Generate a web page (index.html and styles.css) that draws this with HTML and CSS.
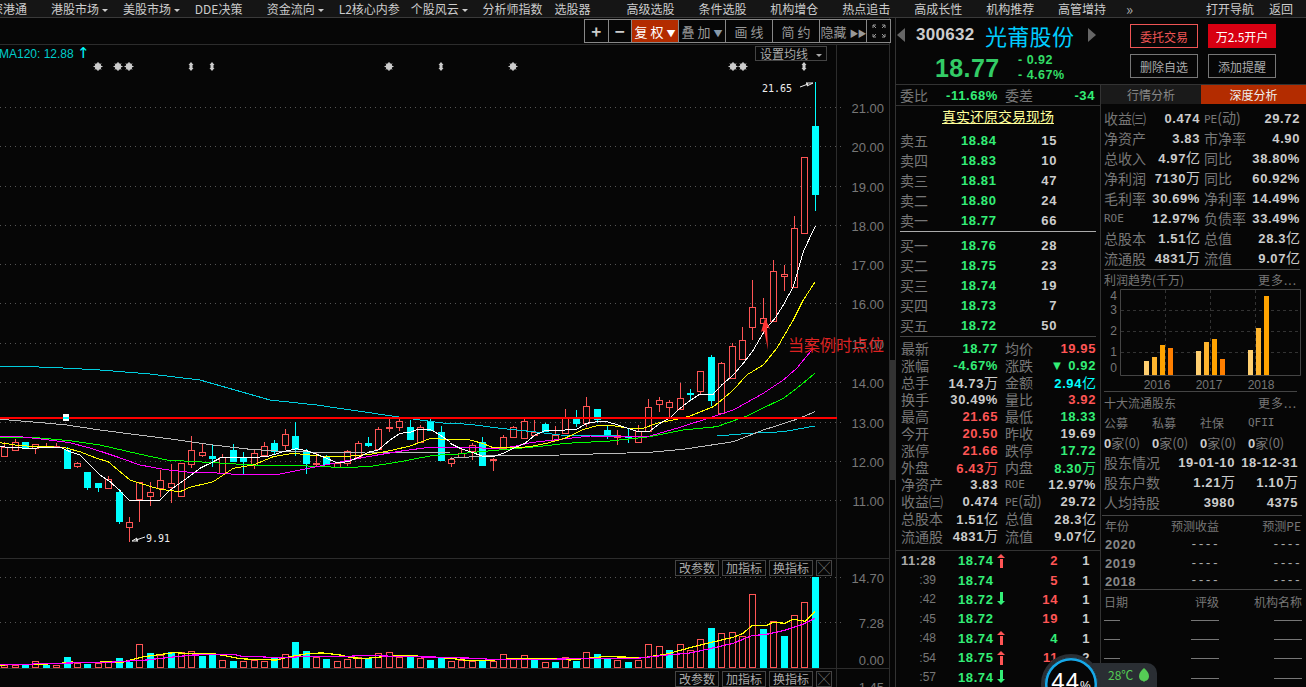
FILE: index.html

```html
<!DOCTYPE html>
<html lang="zh-CN">
<head>
  <meta charset="UTF-8" />
  <title>光莆股份 300632</title>
  <link rel="stylesheet" href="styles.css">
</head>
<body>
<nav class="topnav">
  <a>沪深港通</a>
  <a>港股市场<i class="caret"></i></a>
  <a>美股市场<i class="caret"></i></a>
  <a>DDE决策</a>
  <a>资金流向<i class="caret"></i></a>
  <a>L2核心内参</a>
  <a>个股风云<i class="caret"></i></a>
  <a>分析师指数</a>
  <a>选股器</a>
  <a>高级选股</a>
  <a>条件选股</a>
  <a>机构增仓</a>
  <a>热点追击</a>
  <a>高成长性</a>
  <a>机构推荐</a>
  <a>高管增持</a>
  <a class="more">»</a>
  <a class="nav-open">打开导航</a>
  <a class="nav-back">返回</a>
</nav>

<div class="app">
  <main class="chart-pane">
    <svg id="chart" class="chart" width="895" height="669" viewBox="0 18 895 669"></svg>

    <div class="toolbar">
      <button class="sign">+</button>
      <button class="sign">−</button>
      <button class="active">复 权 <b>▼</b></button>
      <button>叠 加 <b class="tri">▼</b></button>
      <button>画 线</button>
      <button>简 约</button>
      <button class="hide-btn">隐藏 <b>▶▶</b></button>
      <button class="full">
        <svg width="14" height="14" viewBox="0 0 14 14"><path d="M1 4V1h3M10 1h3v3M13 10v3h-3M4 13H1v-3M1 1l3 3M13 1l-3 3M13 13l-3-3M1 13l3-3" /></svg>
      </button>
    </div>

    <div class="ma-label">MA120: 12.88 <span class="ma-arrow">↑</span></div>
    <div class="ma-set">设置均线<i class="caret dim"></i></div>
    <div class="note">当案例时点位</div>

    <div class="ind-tools ind-top"><span>改参数</span><span>加指标</span><span>换指标</span><span class="x">╳</span></div>
    <div class="ind-tools ind-bottom"><span>改参数</span><span>加指标</span><span>换指标</span><span class="x">╳</span></div>
    <div class="scroll"><i></i></div>
  </main>

  <aside class="side">
    <header class="head">
      <div class="quote">
        <div class="quote-top">
          <i class="tri-left"></i>
          <span class="code">300632</span>
          <span class="name">光莆股份</span>
          <i class="tri-right"></i>
        </div>
        <div class="quote-price">
          <span class="last">18.77</span>
          <div class="delta"><span>- 0.92</span><span>- 4.67%</span></div>
        </div>
      </div>
      <div class="actions">
        <button class="btn-line">委托交易</button>
        <button class="btn-red">万2.5开户</button>
        <button>删除自选</button>
        <button>添加提醒</button>
      </div>
    </header>

    <div class="panes">
      <section class="col-left">
        <div class="ratio">
          <span class="lb">委比</span><span class="g num r1">-11.68%</span>
          <span class="lb r2">委差</span><span class="g num r3">-34</span>
        </div>
        <div class="real-link"><a>真实还原交易现场</a></div>

        <div class="book">
          <div class="bk"><span class="lb">卖五</span><span class="g num">18.84</span><span class="w num">15</span></div>
          <div class="bk"><span class="lb">卖四</span><span class="g num">18.83</span><span class="w num">10</span></div>
          <div class="bk"><span class="lb">卖三</span><span class="g num">18.81</span><span class="w num">47</span></div>
          <div class="bk"><span class="lb">卖二</span><span class="g num">18.80</span><span class="w num">24</span></div>
          <div class="bk"><span class="lb">卖一</span><span class="g num">18.77</span><span class="w num">66</span></div>
        </div>
        <div class="book bids">
          <div class="bk"><span class="lb">买一</span><span class="g num">18.76</span><span class="w num">28</span></div>
          <div class="bk"><span class="lb">买二</span><span class="g num">18.75</span><span class="w num">23</span></div>
          <div class="bk"><span class="lb">买三</span><span class="g num">18.74</span><span class="w num">19</span></div>
          <div class="bk"><span class="lb">买四</span><span class="g num">18.73</span><span class="w num">7</span></div>
          <div class="bk"><span class="lb">买五</span><span class="g num">18.72</span><span class="w num">50</span></div>
        </div>

        <div class="stats">
          <div class="st"><span class="lb">最新</span><span class="g num">18.77</span><span class="lb">均价</span><span class="p num">19.95</span></div>
          <div class="st"><span class="lb">涨幅</span><span class="g num">-4.67%</span><span class="lb">涨跌</span><span class="g num">▼ 0.92</span></div>
          <div class="st"><span class="lb">总手</span><span class="w num">14.73<u>万</u></span><span class="lb">金额</span><span class="c num">2.94<u>亿</u></span></div>
          <div class="st"><span class="lb">换手</span><span class="w num">30.49%</span><span class="lb">量比</span><span class="p num">3.92</span></div>
          <div class="st"><span class="lb">最高</span><span class="p num">21.65</span><span class="lb">最低</span><span class="g num">18.33</span></div>
          <div class="st"><span class="lb">今开</span><span class="p num">20.50</span><span class="lb">昨收</span><span class="w num">19.69</span></div>
          <div class="st"><span class="lb">涨停</span><span class="p num">21.66</span><span class="lb">跌停</span><span class="g num">17.72</span></div>
          <div class="st"><span class="lb">外盘</span><span class="p num">6.43<u>万</u></span><span class="lb">内盘</span><span class="g num">8.30<u>万</u></span></div>
          <div class="st"><span class="lb">净资产</span><span class="w num">3.83</span><span class="lb sm">ROE</span><span class="w num">12.97%</span></div>
          <div class="st"><span class="lb">收益㈢</span><span class="w num">0.474</span><span class="lb pe"><span class="sm">PE</span>(动)</span><span class="w num">29.72</span></div>
          <div class="st"><span class="lb">总股本</span><span class="w num">1.51<u>亿</u></span><span class="lb">总值</span><span class="w num">28.3<u>亿</u></span></div>
          <div class="st"><span class="lb">流通股</span><span class="w num">4831<u>万</u></span><span class="lb">流值</span><span class="w num">9.07<u>亿</u></span></div>
        </div>

        <div class="ticks">
          <div class="tk"><span class="t big">11:28</span><span class="price num">18.74</span><i class="up"></i><span class="p num v">2</span><span class="w num n">1</span></div>
          <div class="tk"><span class="t">:39</span><span class="price num">18.74</span><i></i><span class="p num v">5</span><span class="w num n">1</span></div>
          <div class="tk"><span class="t">:42</span><span class="price num">18.72</span><i class="down"></i><span class="p num v">14</span><span class="w num n">1</span></div>
          <div class="tk"><span class="t">:45</span><span class="price num">18.72</span><i></i><span class="p num v">19</span><span class="w num n">1</span></div>
          <div class="tk"><span class="t">:48</span><span class="price num">18.74</span><i class="up"></i><span class="g num v">4</span><span class="w num n">1</span></div>
          <div class="tk"><span class="t">:54</span><span class="price num">18.75</span><i class="up"></i><span class="p num v">11</span><span class="w num n">2</span></div>
          <div class="tk"><span class="t">:57</span><span class="price num">18.74</span><i class="down"></i><span class="p num v">5</span><span class="w num n">2</span></div>
        </div>
      </section>

      <section class="col-right">
        <div class="tabs"><a>行情分析</a><a class="on">深度分析</a></div>

        <div class="fund">
          <div class="fd"><span class="lb">收益㈢</span><span class="w num">0.474</span><span class="lb pe"><span class="sm">PE</span>(动)</span><span class="w num">29.72</span></div>
          <div class="fd"><span class="lb">净资产</span><span class="w num">3.83</span><span class="lb">市净率</span><span class="w num">4.90</span></div>
          <div class="fd"><span class="lb">总收入</span><span class="w num">4.97<u>亿</u></span><span class="lb">同比</span><span class="w num">38.80%</span></div>
          <div class="fd"><span class="lb">净利润</span><span class="w num">7130<u>万</u></span><span class="lb">同比</span><span class="w num">60.92%</span></div>
          <div class="fd"><span class="lb">毛利率</span><span class="w num">30.69%</span><span class="lb">净利率</span><span class="w num">14.49%</span></div>
          <div class="fd"><span class="lb sm">ROE</span><span class="w num">12.97%</span><span class="lb">负债率</span><span class="w num">33.49%</span></div>
          <div class="fd"><span class="lb">总股本</span><span class="w num">1.51<u>亿</u></span><span class="lb">总值</span><span class="w num">28.3<u>亿</u></span></div>
          <div class="fd"><span class="lb">流通股</span><span class="w num">4831<u>万</u></span><span class="lb">流值</span><span class="w num">9.07<u>亿</u></span></div>
        </div>

        <div class="sub-title profit"><span>利润趋势(千万)</span><em>更多...</em></div>
        <div class="profit-chart">
          <svg width="205" height="102" viewBox="0 2 205 102">
            <g class="pc-grid">
              <path d="M19.5 2.500H199.500V88.500H19.500Z" />
              <path class="dash" d="M64.500 3V88M109.500 3V88M154.500 3V88M20 23.500H199M20 44.500H199M20 65.500H199" />
            </g>
            <g class="pc-bars">
              <rect class="q1" x="43" y="74" width="5" height="14" /><rect class="q2" x="51" y="70" width="5" height="18" /><rect class="q3" x="59" y="58" width="5" height="30" /><rect class="q4" x="67" y="61" width="5" height="27" />
              <rect class="q1" x="95" y="64" width="5" height="24" /><rect class="q2" x="103" y="55" width="5" height="33" /><rect class="q3" x="111" y="52" width="5" height="36" /><rect class="q4" x="119" y="72" width="5" height="16" />
              <rect class="q1" x="147" y="63" width="5" height="25" /><rect class="q2" x="155" y="41" width="5" height="47" /><rect class="q3" x="163" y="9" width="5" height="79" />
            </g>
            <g class="pc-text">
              <text x="16" y="13" text-anchor="end">4</text><text x="16" y="27" text-anchor="end">3</text><text x="16" y="48" text-anchor="end">2</text><text x="16" y="69" text-anchor="end">1</text><text x="16" y="85" text-anchor="end">0</text>
              <text x="56" y="102" text-anchor="middle">2016</text><text x="108" y="102" text-anchor="middle">2017</text><text x="160" y="102" text-anchor="middle">2018</text>
            </g>
          </svg>
        </div>

        <div class="sub-title holders"><span>十大流通股东</span><em>更多...</em></div>
        <div class="four heads"><span>公募</span><span>私募</span><span>社保</span><span class="sm">QFII</span></div>
        <div class="four zero">
          <span><b>0</b>家(0)</span><span><b>0</b>家(0)</span><span><b>0</b>家(0)</span><span><b>0</b>家(0)</span>
        </div>
        <div class="hd"><span class="lb">股东情况</span><span class="w num">19-01-10</span><span class="w num">18-12-31</span></div>
        <div class="hd"><span class="lb">股东户数</span><span class="w num">1.21<u>万</u></span><span class="w num">1.10<u>万</u></span></div>
        <div class="hd"><span class="lb">人均持股</span><span class="w num">3980</span><span class="w num">4375</span></div>

        <div class="fc fc-head"><span>年份</span><span>预测收益</span><span>预测PE</span></div>
        <div class="fc"><span class="yr">2020</span><span class="dashes">----</span><span class="dashes">----</span></div>
        <div class="fc"><span class="yr">2019</span><span class="dashes">----</span><span class="dashes">----</span></div>
        <div class="fc fc-last"><span class="yr">2018</span><span class="dashes">----</span><span class="dashes">----</span></div>

        <div class="rt rt-head"><span>日期</span><span>评级</span><span>机构名称</span></div>
        <div class="rt rt-row"><i class="s"></i><i></i><i></i></div>
        <div class="rt rt-row"><i class="s"></i><i></i><i></i></div>
        <div class="rt rt-row"><i class="s"></i><i></i><i></i></div>
        <div class="rt rt-row"><i class="s"></i><i></i><i></i></div>
      </section>
    </div>

    <div class="monitor">
      <div class="gauge"><span>44<small>%</small></span></div>
      <div class="temp">28℃
        <svg width="10" height="14" viewBox="0 0 10 14"><path d="M5 0C8 3 10 5 10 8.500C10 11 8 13 5.500 13V14H4.500V13C2 13 0 11 0 8.500C0 5 2 3 5 0Z" /></svg>
      </div>
    </div>
  </aside>
</div>
<script src="chart.js"></script>
</body>
</html>
```

FILE: styles.css

```css
* { box-sizing: border-box; }
html, body { margin: 0; padding: 0; }
body {
  width: 1306px; height: 687px; overflow: hidden;
  background: #060606; color: #ccc;
  font-family: "Noto Sans CJK SC", "Liberation Sans", sans-serif;
  font-size: 12px;
}
button { font-family: inherit; cursor: pointer; }

/* top menu */
.topnav {
  display: flex; align-items: center;
  height: 18px; margin-left: -21px; width: 1327px;
  background: #151515; border-bottom: 1px solid #3a3a3a;
  line-height: 17px; color: #ccc; white-space: nowrap;
}
.topnav a { flex: 0 0 71.95px; }
.topnav .more { flex: 0 0 20px; margin-left: -4px; color: #aaa; font-size: 15px; }
.topnav .nav-open { flex: 0 0 63px; margin-left: 60px; }
.topnav .nav-back { flex: 0 0 40px; }
.caret {
  display: inline-block; width: 0; height: 0; margin-left: 3px; vertical-align: 2px;
  border: 3px solid transparent; border-top: 3px solid #ccc; border-bottom: 0;
}
.caret.dim { margin-left: 8px; border-top-color: #aaa; }

.app { display: flex; height: 669px; }

/* chart */
.chart-pane { position: relative; width: 895px; flex: none; overflow: hidden; }
.chart { display: block; }
.chart .grid { stroke: #555; stroke-dasharray: 1 4; fill: none; }
.chart .rule { stroke: #2c2c2c; fill: none; }
.chart .neck { stroke: #f00; stroke-width: 2; }
.chart text { font-family: "Liberation Sans", sans-serif; }
.chart .axis { fill: #777; font-size: 13px; text-anchor: end; }
.chart .peak { fill: #eee; font-family: "DejaVu Sans Mono", monospace; font-size: 10px; }
.chart .pointer { stroke: #eee; fill: none; }
.chart .mark { fill: #ccc; stroke: #ccc; }
.chart .flip { fill: #ccc; }
.chart .up { stroke: #f55; fill: #060606; }
.chart .dn { stroke: #0ff; fill: #0ff; }
.chart .wick-up { stroke: #f55; }
.chart .wick-dn { stroke: #0ff; }
.chart .ma { fill: none; shape-rendering: crispEdges; }
.chart .l1 { stroke: #fff; }
.chart .l2 { stroke: #ff0; }
.chart .l3 { stroke: #f0f; }
.chart .l4 { stroke: #0f0; }
.chart .l5 { stroke: #bbb; }
.chart .l6 { stroke: #0cd; }
.chart .vol { stroke-width: 1.2; }
.chart .note-arrow { fill: #f33; }

.toolbar {
  position: absolute; left: 584px; top: 1px;
  display: flex; height: 24px;
  border: 1px solid #888;
}
.toolbar button {
  flex: none; width: 47px; padding: 0;
  background: #060606; color: #999; border: 0; border-right: 1px solid #888;
  font-size: 13px; white-space: nowrap;
}
.toolbar button b { font-size: 9px; color: #ccc; font-weight: normal; }
.toolbar .sign { width: 23.5px; color: #ccc; font-size: 17px; font-weight: bold; line-height: 18px; }
.toolbar .active { background: #b32c00; color: #fff; }
.toolbar .active b { color: #fff; }
.toolbar .tri { color: #89a; }
.toolbar .hide-btn b { color: #999; letter-spacing: -1px; }
.toolbar .full { width: 23px; border-right: 0; }
.full svg { display: block; margin: 0 auto; fill: none; stroke: #999; }

.ma-label {
  position: absolute; left: -1px; top: 27px;
  color: #0cc; font: 12px/16px "Liberation Sans", sans-serif;
}
.ma-arrow { color: #0ff; font: 15px/16px "DejaVu Sans", sans-serif; }
.ma-set {
  position: absolute; left: 755px; top: 28px; width: 72px; height: 15px;
  border: 1px solid #444; color: #aaa; line-height: 13px; text-align: center;
}
.note {
  position: absolute; left: 788px; top: 315px;
  color: #d22; font-size: 16px; line-height: 22px; white-space: nowrap;
}

.ind-tools { position: absolute; left: 675px; display: flex; gap: 3px; height: 16px; }
.ind-top { top: 542px; }
.ind-bottom { top: 653px; }
.ind-tools span {
  width: 44px; border: 1px solid #444; color: #aaa; background: #060606;
  text-align: center; line-height: 14px;
}
.ind-tools .x { width: 16px; font-size: 12px; color: #999; }

.scroll { position: absolute; left: 890px; top: 26px; width: 5px; height: 643px; }
.scroll i { display: block; margin-top: 316px; height: 120px; background: #333; }

/* right side */
.side { position: relative; width: 411px; flex: none; border-left: 1px solid #333; }
.head { display: flex; height: 67px; border-bottom: 1px solid #333; }
.quote { width: 234px; flex: none; }
.quote-top { display: flex; align-items: center; height: 33px; }
.tri-left, .tri-right { width: 0; height: 0; border: 7px solid transparent; }
.tri-left { border-right: 8px solid #666; border-left: 0; margin-left: 1px; }
.tri-right { border-left: 8px solid #666; border-right: 0; margin-left: 14px; }
.code {
  margin-left: 11px; width: 69px;
  font: bold 17px/20px "Liberation Sans", sans-serif; color: #ccc; letter-spacing: .3px;
}
.name { color: #0cf; font-size: 22px; line-height: 28px; letter-spacing: .3px; }
.quote-price { display: flex; align-items: center; height: 33px; padding-left: 39px; }
.last { width: 83px; color: #3c6; font: bold 25px/30px "Liberation Sans", sans-serif; letter-spacing: .4px; }
.delta { display: flex; flex-direction: column; color: #3d6; font: bold 12.500px/15px "Liberation Sans", sans-serif; letter-spacing: .5px; }

.actions { display: grid; grid-template-columns: 68px 68px; column-gap: 10px; row-gap: 6px; padding-top: 6px; grid-auto-rows: 24px; }
.actions button { background: #060606; color: #aaa; border: 1px solid #777; padding: 0; font-size: 12px; }
.actions .btn-line { border-color: #e55; color: #e55; }
.actions .btn-red { background: #d80012; border-color: #d80012; color: #fff; }

.panes { display: flex; height: 602px; }
.col-left { width: 205px; flex: none; border-right: 1px solid #333; }
.col-right { width: 205px; flex: none; }

.lb { color: #777; font-size: 14px; line-height: 15px; white-space: nowrap; }
.lb.sm, .sm { font-family: "DejaVu Sans Mono", monospace; font-size: 11px; color: #777; }
.num {
  font: bold 13px/15px "Liberation Sans", sans-serif; letter-spacing: .6px;
  text-align: right; white-space: nowrap;
}
.num u { text-decoration: none; font-family: "Noto Sans CJK SC", sans-serif; font-weight: normal; font-size: 14px; line-height: 15px; letter-spacing: 0; }
.g { color: #3e7; }
.w { color: #ccc; }
.p { color: #f55; }
.c { color: #0ff; }

.ratio {
  display: grid; grid-template-columns: 34px 64px 40px 57px; align-items: center;
  height: 21px; padding-left: 4px; border-bottom: 1px solid #333;
}
.ratio .r2 { padding-left: 7px; }
.real-link { height: 24px; text-align: center; line-height: 20px; }
.real-link a { color: #ff9; font-size: 14px; text-decoration: underline; }

.book { height: 102px; margin: 0 4px; border-bottom: 1px solid #aaa; }
.book.bids { height: 105px; padding-top: 3px; border-bottom-color: #444; }
.bk { display: grid; grid-template-columns: 61px 62px 34px; align-items: center; height: 20px; }
.bk .g { text-align: left; }

.stats { height: 214px; padding: 3px 0 0 5px; margin-top: 0; border-bottom: 1px solid #333; }
.st { display: grid; grid-template-columns: 97px 7px 35px 56px; height: 17.050px; align-items: center; }
.st > :nth-child(1) { grid-column: 1; grid-row: 1; }
.st > :nth-child(2) { grid-column: 1; grid-row: 1; }
.st > :nth-child(3) { grid-column: 3; grid-row: 1; }
.st > :nth-child(4) { grid-column: 3 / 5; grid-row: 1; }

.ticks { padding-top: 0; }
.tk { display: flex; align-items: center; height: 19.400px; }
.tk .t { width: 40px; text-align: right; color: #777; font: 12px "Liberation Sans", sans-serif; }
.tk .big { color: #aaa; font: bold 13px "Liberation Sans", sans-serif; letter-spacing: .5px; }
.tk .price { width: 39px; margin-left: 22px; text-align: left; color: #3e7; }
.tk i { position: relative; width: 9px; height: 14px; flex: none; }
.tk .up::before, .tk .down::before { content: ""; position: absolute; left: 3px; width: 3px; height: 9px; }
.tk .up::after, .tk .down::after { content: ""; position: absolute; left: 0; border: 4.500px solid transparent; }
.tk .up::before { top: 5px; background: #f55; }
.tk .up::after { top: -4px; border-bottom-color: #f55; }
.tk .down::before { top: 0; background: #3e7; }
.tk .down::after { top: 9px; border-top-color: #3e7; }
.tk .v { width: 52px; }
.tk .n { width: 32px; }

.tabs { display: flex; height: 19px; }
.tabs a { display: block; width: 100px; text-align: center; color: #888; background: #1a1a1a; font-size: 12px; line-height: 19px; }
.tabs .on { width: 105px; background: #b32c00; color: #eee; }

.fund { height: 166px; margin: 0 6px 0 3px; padding-top: 4px; border-bottom: 1px solid #444; }
.fd { display: grid; grid-template-columns: 96px 4px 47px 49px; height: 20px; align-items: center; }
.fd > :nth-child(1), .fd > :nth-child(2) { grid-column: 1; grid-row: 1; }
.fd > :nth-child(3) { grid-column: 3; grid-row: 1; }
.fd > :nth-child(4) { grid-column: 3 / 5; grid-row: 1; }

.sub-title { display: flex; justify-content: space-between; margin: 0 9px 0 3px; color: #777; font-size: 12px; }
.sub-title em { font-style: normal; font-size: 12px; letter-spacing: 1px; }
.sub-title.profit { height: 19px; line-height: 19px; }
.profit-chart { height: 102px; }
.profit-chart svg { display: block; }
.pc-grid path { fill: none; stroke: #444; }
.pc-grid .dash { stroke-dasharray: 3 3; stroke: #333; }
.pc-text text { fill: #777; font-size: 12px; font-family: "Liberation Sans", sans-serif; }
.q1 { fill: #ffcf70; }
.q2 { fill: #ffb52e; }
.q3 { fill: #ffa300; }
.q4 { fill: #ff7f00; }

.sub-title.holders { height: 21px; line-height: 21px; margin-right: 9px; border-top: 1px solid #444; }
.four { display: grid; grid-template-columns: repeat(4, 48px); padding-left: 3px; height: 20px; align-items: center; color: #777; font-size: 13px; white-space: nowrap; }
.four b { color: #ccc; font-family: "Liberation Sans", sans-serif; }
.four.heads { font-size: 12px; }
.hd { display: grid; grid-template-columns: 63px 68px 63px; margin-left: 3px; height: 20px; align-items: center; }

.fc { display: grid; grid-template-columns: 52px 62px 82px; align-items: center; height: 19px; margin: 0 0 0 4px; width: 196px; color: #888; text-align: right; }
.fc span:first-child { text-align: left; }
.fc-head { height: 20px; width: 200px; margin: 3px 0 0 1px; padding-left: 3px; border-top: 1px solid #444; color: #777; font-size: 12px; grid-template-columns: 52px 62px 82px; }
.fc .yr { font: bold 13px "Liberation Sans", sans-serif; color: #888; letter-spacing: .5px; }
.fc .dashes { font: 12px "Liberation Mono", monospace; color: #aaa; }
.fc-last { height: 17px; width: 198px; margin-left: 3px; padding-left: 1px; border-bottom: 1px solid #444; grid-template-columns: 52px 62px 82px; }

.rt { display: grid; margin: 0 4px 0 3px; align-items: center; }
.rt-head { height: 21px; padding-top: 2px; color: #777; font-size: 12px; grid-template-columns: 60px 55px 83px; white-space: nowrap; }
.rt-head span:nth-child(2), .rt-head span:nth-child(3) { text-align: right; }
.rt-row { height: 19.200px; grid-template-columns: 87px 28px 55px 28px; }
.rt-row i { display: block; height: 1px; background: #777; }
.rt-row i:nth-child(3) { grid-column: 4; }
.rt-row .s { width: 16px; }

/* floating speed ball */
.monitor { position: absolute; left: 145px; top: 636px; display: flex; align-items: flex-start; }
.gauge {
  position: relative; z-index: 1; width: 60px; height: 60px; border-radius: 50%;
  background: #060606; border: 3px solid #2a2e33; box-shadow: inset 0 0 0 1px #2a2e33, inset 0 0 0 3.500px #16a8e8;
  text-align: center; color: #fff; font: 24px/50px "Liberation Sans", sans-serif; letter-spacing: 1px;
}
.gauge small { font-size: 12px; letter-spacing: 0; }
.temp {
  display: flex; align-items: center; gap: 6px; height: 24px; margin: 9px 0 0 -8px; padding: 0 8px 0 15px;
  background: #2a2e33; border-radius: 0 10px 0 0; color: #5c5; font-size: 12px; line-height: 24px;
}
.temp svg { fill: #5c5; }
```

FILE: chart.js

```js
// all points below were read off at 3x, so y/x are in thirds of a pixel
const LEFT = { x: 0, y: 400 };
const RIGHT = { x: 450, y: 60 };
const VOL_L = { x: 0, y: 550 };
const VOL_R = { x: 450, y: 550 };

// [color, bodyTop, bodyBottom, wickTop, wickBottom]
const candlesA = [
  ['u',140,167,125,170],['u',127,149,118,150],['d',127,145,125,147],['u',131,145,131,162],['u',139,142,128,145],
  ['u',137,141,128,145],['d',150,204,140,207],['u',190,197,185,204],['d',216,261,216,270],['d',249,261,249,276],
  ['u',237,263,228,264],['d',276,362,268,372],['u',367,380,350,426],['u',247,297,247,366],['u',277,287,247,318],
  ['u',241,264,210,290],['u',250,260,192,310],['u',190,287,190,287],['u',151,193,108,203],['u',157,164,128,172],
  ['d',169,173,135,200],['u',172,219,163,222],['d',151,183,132,186],['d',172,183,156,222],['u',160,195,147,207],
  ['u',139,164,126,165],['d',129,154,120,162],['u',103,136,87,150],['d',108,146,66,168],['d',154,189,148,221],
  ['u',188,192,160,198],['d',172,193,165,195],['u',190,202,185,202],['u',154,190,150,198],['u',130,170,123,172],
  ['d',129,134,110,142],['u',88,146,82,148],['u',80,83,55,95],['u',64,82,58,92],['d',81,116,60,120],
  ['u',80,125,74,127],['d',63,90,55,92],['d',96,180,78,182]
];
const candlesB = [
  ['u',1198,1210,1190,1222],['u',1178,1192,1160,1193],['u',1156,1172,1150,1200],['d',1147,1214,1132,1215],['u',1197,1201,1195,1232],
  ['u',1130,1165,1125,1167],['u',1100,1132,1098,1134],['u',1082,1135,1078,1138],['u',1116,1124,1080,1127],['d',1093,1114,1090,1116],
  ['u',1125,1140,1098,1140],['u',1075,1120,1047,1122],['d',1070,1090,1050,1102],['u',1037,1088,1012,1102],['d',1048,1078,1048,1090],
  ['d',1110,1122,1098,1137],['u',1124,1130,1110,1154],['d',1128,1132,1107,1148],['u',1114,1147,1095,1148],['u',1040,1113,1018,1114],
  ['u',1021,1033,1011,1055],['u',1025,1040,1020,1075],['u',1013,1046,968,1047],['d',1000,1003,988,1020],['u',934,992,934,1004],
  ['d',891,1019,886,1037],['u',910,1060,907,1062],['u',859,953,848,955],['u',841,896,801,899],['u',742,802,660,840],
  ['u',775,788,714,816],['u',634,782,600,784],['u',643,649,614,692],['u',505,680,468,682],['u',292,520,292,520],
  ['d',198,402,66,453]
];

// volume bars, same order as the candles: [color, top]
const volA = 'u344 u344 d344 u334 d344 u344 d321 u338 d341 u340 u337 d324 d335 u283 d309 u315 d306 u306 u304 d318 d315 u331 d333 u334 u331 u332 d324 u313 d276 d303 u320 d327 u334 u328 u322 d325 u310 u307 u320 d318 u325 d330 d322'.split(' ');
const volB = 'u333 u330 u333 d333 u334 u313 u325 u316 d330 u337 d336 u322 d332 u307 d312 d325 u331 d336 u330 u283 u289 d300 u283 u301 u268 d234 u250 u247 u259 u133 d237 u214 d258 u196 u157 d81'.split(' ');

const lines = [
  ['l6', LEFT, [[0,-102],[150,-98],[300,-90],[450,-78],[600,-60],[810,0],[950,15],[1100,37],[1190,50],[1245,58],[1350,72]]],
  ['l6', RIGHT, [[0,1090],[60,1093],[150,1105],[250,1115],[330,1125],[500,1128],[800,1128],[900,1120],[1000,1115],[1095,1098]]],
  ['l5', LEFT, [[0,58],[90,65],[200,75],[300,90],[400,103],[520,118],[640,135],[750,148],[860,155],[1000,157],[1100,156],[1250,157],[1350,158]]],
  ['l5', RIGHT, [[0,1195],[100,1188],[330,1185],[600,1177],[700,1168],[850,1145],[940,1110],[1040,1078],[1095,1055]]],
  ['l4', LEFT, [[0,112],[120,114],[210,122],[300,135],[400,158],[500,180],[620,187],[760,195],[900,197],[980,200],[1030,204],[1120,198],[1200,185],[1290,168],[1350,162]]],
  ['l4', RIGHT, [[0,1185],[60,1178],[170,1168],[260,1160],[350,1150],[480,1143],[600,1130],[700,1110],[800,1100],[890,1068],[1000,1015],[1040,985],[1095,940]]],
  ['l3', LEFT, [[0,110],[60,110],[130,118],[210,128],[280,147],[350,170],[420,195],[490,208],[560,216],[640,218],[720,224],[830,224],[900,210],[960,198],[1040,182],[1120,167],[1210,152],[1280,143],[1350,143]]],
  ['l3', RIGHT, [[0,1162],[60,1162],[130,1166],[190,1160],[240,1148],[330,1138],[420,1128],[520,1130],[600,1128],[680,1105],[790,1070],[850,1050],[940,1000],[1000,960],[1040,925],[1090,865]]],
  ['l2', LEFT, [[0,128],[60,137],[130,140],[190,142],[240,155],[290,175],[325,185],[360,215],[390,240],[420,250],[480,268],[540,275],[570,262],[640,245],[670,225],[700,205],[760,195],[820,170],[880,160],[960,168],[1030,170],[1110,163],[1170,152],[1230,138],[1290,116],[1350,118]]],
  ['l2', RIGHT, [[0,1137],[60,1140],[97,1150],[130,1163],[190,1163],[240,1160],[290,1150],[345,1135],[395,1110],[440,1097],[490,1097],[535,1105],[580,1105],[620,1090],[680,1078],[720,1068],[790,1040],[815,1020],[850,990],[890,945],[940,915],[980,865],[1030,780],[1060,720],[1095,666]]],
  ['l1', LEFT, [[0,139],[30,143],[100,145],[140,142],[180,142],[210,155],[240,165],[270,195],[300,225],[330,245],[360,272],[388,300],[480,300],[511,270],[560,235],[600,205],[640,185],[665,172],[760,172],[800,170],[850,155],[890,146],[920,152],[950,163],[980,175],[1010,188],[1045,185],[1075,172],[1105,157],[1135,150],[1170,120],[1200,100],[1230,97],[1255,88],[1290,88],[1320,105],[1350,125]]],
  ['l1', RIGHT, [[0,1150],[30,1165],[60,1175],[97,1188],[130,1190],[160,1180],[190,1165],[225,1150],[255,1125],[285,1112],[345,1110],[380,1108],[410,1090],[440,1085],[470,1085],[505,1095],[535,1105],[565,1115],[600,1113],[630,1090],[660,1073],[690,1045],[720,1022],[750,1002],[790,1002],[815,975],[850,945],[880,910],[910,870],[945,810],[975,775],[1000,735],[1030,680],[1060,575],[1096,498]]],
];
const volLines = [
  ['l2 vol', VOL_L, [[0,345],[120,343],[180,340],[215,336],[250,338],[310,336],[370,336],[400,328],[430,320],[470,315],[520,308],[560,310],[640,311],[680,318],[720,326],[780,329],[830,330],[870,320],[930,310],[970,309],[1020,315],[1060,324],[1100,325],[1150,320],[1220,316],[1280,320],[1350,325]]],
  ['l2 vol', VOL_R, [[0,325],[50,331],[120,331],[200,325],[300,325],[360,330],[460,320],[520,321],[580,323],[650,312],[720,293],[780,278],[850,262],[880,250],[905,227],[950,226],[970,217],[1005,220],[1030,208],[1065,214],[1095,184]]],
  ['l3 vol', VOL_L, [[0,343],[90,343],[120,340],[180,340],[240,338],[310,338],[370,334],[440,330],[510,322],[580,315],[700,313],[730,320],[780,320],[840,324],[900,320],[1030,320],[1090,316],[1220,320],[1350,322]]],
  ['l3 vol', VOL_R, [[0,323],[85,325],[130,329],[300,328],[420,325],[550,326],[650,315],[720,309],[780,296],[850,280],[905,257],[950,253],[1000,242],[1060,222],[1095,205]]],
];

const price = [[21,107],[20,146],[19,186],[18,225],[17,264],[16,303],[15,343],[14,382],[13,422],[12,461],[11,500]];
const stars = [98, 118, 129, 389, 513, 733, 743];
const flips = [191, 212, 441, 804];

const candleX = i => Math.round(4.3 + 10.39 * i);
const toPx = (v, base) => base + v / 3;
const crisp = v => Math.round(v) + 0.5;
let out = '';

function hline(cls, y, x1, x2) {
  out += `<path class="${cls}" d="M${x1} ${crisp(y)}H${x2}" shape-rendering="crispEdges" />`;
}

// grid
price.forEach(p => hline('grid', p[1], 0, 845));
hline('grid', 577, 0, 845);
hline('grid', 622, 0, 845);
hline('rule', 44, 0, 889);
hline('rule', 558, 0, 889);
hline('rule', 668, 0, 889);
out += '<path class="rule" d="M836.5 44V687M889.5 18V687" />';

// axis
price.forEach(p => {
  out += `<text class="axis" x="884" y="${p[1] + 6}">${p[0]}.00</text>`;
});
out += '<text class="axis" x="884" y="583">14.70</text><text class="axis" x="884" y="628">7.28</text><text class="axis" x="884" y="665">0.00</text><text class="axis" x="884" y="692">1.45</text>';

function drawCandle(c, i, base) {
  const x = candleX(i);
  const top = Math.round(toPx(c[1], base.y));
  const bottom = Math.round(toPx(c[2], base.y));
  const wTop = Math.round(toPx(c[3], base.y));
  const wBottom = Math.round(toPx(c[4], base.y));
  const wick = c[0] === 'u' ? 'wick-up' : 'wick-dn';
  out += `<path class="${wick}" shape-rendering="crispEdges" d="M${x + 0.5} ${wTop}V${top}M${x + 0.5} ${bottom}V${wBottom}" />`;
  out += `<rect class="${c[0] === 'u' ? 'up' : 'dn'}" shape-rendering="crispEdges" x="${x - 2.5}" y="${top + 0.5}" width="6" height="${Math.max(bottom - top, 1)}" />`;
}

function drawVol(v, i) {
  const x = candleX(i);
  const top = Math.round(toPx(Number(v.slice(1)), 550));
  out += `<rect class="${v[0] === 'u' ? 'up' : 'dn'}" shape-rendering="crispEdges" x="${x - 2.5}" y="${top + 0.5}" width="6" height="${667 - top}" />`;
}

candlesA.forEach((c, i) => drawCandle(c, i, LEFT));
candlesB.forEach((c, i) => drawCandle(c, i + 43, RIGHT));
volA.forEach(drawVol);
volB.forEach((v, i) => drawVol(v, i + 43));

function drawLine(l) {
  const pts = l[2].map(p => `${(l[1].x + p[0] / 3).toFixed(1)},${(l[1].y + p[1] / 3).toFixed(1)}`).join(' ');
  out += `<polyline class="ma ${l[0]}" points="${pts}" />`;
}
lines.forEach(drawLine);
volLines.forEach(drawLine);

// the support line and its little marker
out += '<path class="neck" d="M0 418H837" shape-rendering="crispEdges" />';
out += '<rect x="63" y="414" width="6" height="3" fill="#fff" /><rect x="63" y="417" width="6" height="2" fill="#0ff" /><rect x="63" y="419" width="6" height="2" fill="#fff" />';

// markers over the candles
stars.forEach(x => {
  out += `<g class="mark"><circle cx="${x}" cy="66.500" r="3" /><path d="M${x - 4.500} 66.500h9M${x} 62v9M${x - 3} 63.500l6 6M${x + 3} 63.500l-6 6" /></g>`;
});
flips.forEach(x => {
  out += `<path class="flip" d="M${x} 62l2.500 3h-1v3h1l-2.500 3l-2.500-3h1v-3h-1z" />`;
});

// high / low labels
out += '<text class="peak" x="762" y="92">21.65</text><path class="pointer" d="M800 87l8-3M808 84l-2-1h7l-6 3z" />';
out += '<text class="peak" x="146" y="542">9.91</text><path class="pointer" d="M145 537l-9 3M136 540l2 1h-6l5-3z" />';

// arrow for the note
out += '<polygon class="note-arrow" points="765,318 770,329 767,327 768,350 764,330 761,332" />';

document.getElementById('chart').innerHTML = out;
```
